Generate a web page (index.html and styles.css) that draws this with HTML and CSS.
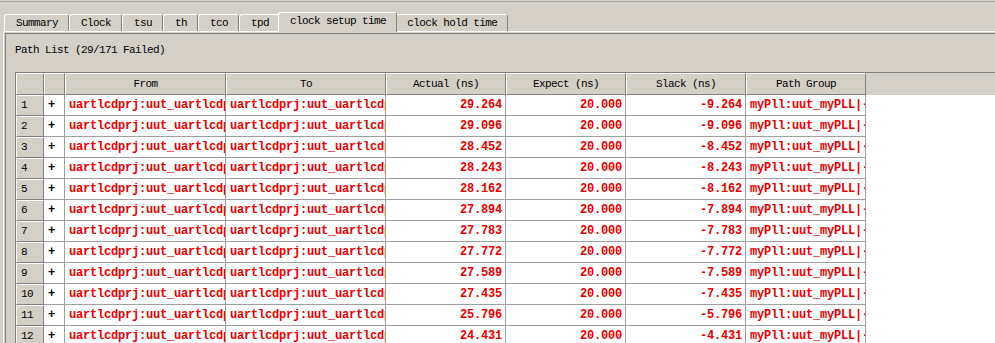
FILE: index.html
```html
<!DOCTYPE html>
<html>
<head>
    <title>Timing Analyzer - clock setup time</title>
    <link rel="stylesheet" href="styles.css">
</head>
<body>
    <div class="window">
        <div class="tabs">
            <div class="tab">Summary</div>
            <div class="tab">Clock</div>
            <div class="tab">tsu</div>
            <div class="tab">th</div>
            <div class="tab">tco</div>
            <div class="tab">tpd</div>
            <div class="tab active">clock setup time</div>
            <div class="tab">clock hold time</div>
        </div>

        <div class="panel">
            <div class="panel-inner">
                <div class="caption">Path List (29/171 Failed)</div>

                <div class="grid">
                    <div class="row head">
                        <div class="hc"></div>
                        <div class="hc"></div>
                        <div class="hc">From</div>
                        <div class="hc">To</div>
                        <div class="hc">Actual (ns)</div>
                        <div class="hc">Expect (ns)</div>
                        <div class="hc">Slack (ns)</div>
                        <div class="hc">Path Group</div>
                        <div class="hfill"></div>
                    </div>

                    <div class="row">
                        <div class="num">1</div><div class="plus">+</div>
                        <div class="cell">uartlcdprj:uut_uartlcdp</div>
                        <div class="cell">uartlcdprj:uut_uartlcdp</div>
                        <div class="cell r">29.264</div><div class="cell r">20.000</div><div class="cell r">-9.264</div>
                        <div class="cell">myPll:uut_myPLL|-</div><div class="fill"></div>
                    </div>
                    <div class="row">
                        <div class="num">2</div><div class="plus">+</div>
                        <div class="cell">uartlcdprj:uut_uartlcdp</div>
                        <div class="cell">uartlcdprj:uut_uartlcdp</div>
                        <div class="cell r">29.096</div><div class="cell r">20.000</div><div class="cell r">-9.096</div>
                        <div class="cell">myPll:uut_myPLL|-</div><div class="fill"></div>
                    </div>
                    <div class="row">
                        <div class="num">3</div><div class="plus">+</div>
                        <div class="cell">uartlcdprj:uut_uartlcdp</div>
                        <div class="cell">uartlcdprj:uut_uartlcdp</div>
                        <div class="cell r">28.452</div><div class="cell r">20.000</div><div class="cell r">-8.452</div>
                        <div class="cell">myPll:uut_myPLL|-</div><div class="fill"></div>
                    </div>
                    <div class="row">
                        <div class="num">4</div><div class="plus">+</div>
                        <div class="cell">uartlcdprj:uut_uartlcdp</div>
                        <div class="cell">uartlcdprj:uut_uartlcdp</div>
                        <div class="cell r">28.243</div><div class="cell r">20.000</div><div class="cell r">-8.243</div>
                        <div class="cell">myPll:uut_myPLL|-</div><div class="fill"></div>
                    </div>
                    <div class="row">
                        <div class="num">5</div><div class="plus">+</div>
                        <div class="cell">uartlcdprj:uut_uartlcdp</div>
                        <div class="cell">uartlcdprj:uut_uartlcdp</div>
                        <div class="cell r">28.162</div><div class="cell r">20.000</div><div class="cell r">-8.162</div>
                        <div class="cell">myPll:uut_myPLL|-</div><div class="fill"></div>
                    </div>
                    <div class="row">
                        <div class="num">6</div><div class="plus">+</div>
                        <div class="cell">uartlcdprj:uut_uartlcdp</div>
                        <div class="cell">uartlcdprj:uut_uartlcdp</div>
                        <div class="cell r">27.894</div><div class="cell r">20.000</div><div class="cell r">-7.894</div>
                        <div class="cell">myPll:uut_myPLL|-</div><div class="fill"></div>
                    </div>
                    <div class="row">
                        <div class="num">7</div><div class="plus">+</div>
                        <div class="cell">uartlcdprj:uut_uartlcdp</div>
                        <div class="cell">uartlcdprj:uut_uartlcdp</div>
                        <div class="cell r">27.783</div><div class="cell r">20.000</div><div class="cell r">-7.783</div>
                        <div class="cell">myPll:uut_myPLL|-</div><div class="fill"></div>
                    </div>
                    <div class="row">
                        <div class="num">8</div><div class="plus">+</div>
                        <div class="cell">uartlcdprj:uut_uartlcdp</div>
                        <div class="cell">uartlcdprj:uut_uartlcdp</div>
                        <div class="cell r">27.772</div><div class="cell r">20.000</div><div class="cell r">-7.772</div>
                        <div class="cell">myPll:uut_myPLL|-</div><div class="fill"></div>
                    </div>
                    <div class="row">
                        <div class="num">9</div><div class="plus">+</div>
                        <div class="cell">uartlcdprj:uut_uartlcdp</div>
                        <div class="cell">uartlcdprj:uut_uartlcdp</div>
                        <div class="cell r">27.589</div><div class="cell r">20.000</div><div class="cell r">-7.589</div>
                        <div class="cell">myPll:uut_myPLL|-</div><div class="fill"></div>
                    </div>
                    <div class="row">
                        <div class="num">10</div><div class="plus">+</div>
                        <div class="cell">uartlcdprj:uut_uartlcdp</div>
                        <div class="cell">uartlcdprj:uut_uartlcdp</div>
                        <div class="cell r">27.435</div><div class="cell r">20.000</div><div class="cell r">-7.435</div>
                        <div class="cell">myPll:uut_myPLL|-</div><div class="fill"></div>
                    </div>
                    <div class="row">
                        <div class="num">11</div><div class="plus">+</div>
                        <div class="cell">uartlcdprj:uut_uartlcdp</div>
                        <div class="cell">uartlcdprj:uut_uartlcdp</div>
                        <div class="cell r">25.796</div><div class="cell r">20.000</div><div class="cell r">-5.796</div>
                        <div class="cell">myPll:uut_myPLL|-</div><div class="fill"></div>
                    </div>
                    <div class="row">
                        <div class="num">12</div><div class="plus">+</div>
                        <div class="cell">uartlcdprj:uut_uartlcdp</div>
                        <div class="cell">uartlcdprj:uut_uartlcdp</div>
                        <div class="cell r">24.431</div><div class="cell r">20.000</div><div class="cell r">-4.431</div>
                        <div class="cell">myPll:uut_myPLL|-</div><div class="fill"></div>
                    </div>
                </div>
            </div>
        </div>
    </div>
</body>
</html>
```

FILE: styles.css
```css
body {
    margin: 0;
    padding-top: 1px;
    background-color: #d4d0c8;
    font-family: "Liberation Mono", "DejaVu Sans Mono", monospace;
    font-size: 11px;
    letter-spacing: -0.6px;
    color: #000;
    overflow: hidden;
}
.window {
    border-top: 1px solid #a8a5a0;
}
.tabs {
    display: flex;
    align-items: flex-end;
    height: 29px;
    padding-left: 4px;
}
.tab {
    box-sizing: border-box;
    height: 17px;
    line-height: 17px;
    padding: 0 10px 0 11px;
    border: 1px solid #fff;
    border-bottom: none;
    border-right-color: #808080;
    border-radius: 3px 3px 0 0;
    white-space: nowrap;
}
.tab.active {
    height: 20px;
    line-height: 17px;
    margin: 0 -2px -1px;
    padding: 0 10px 0 11px;
    background-color: #d4d0c8;
    z-index: 1;
}
.panel {
    margin-left: 3px;
    border-top: 1px solid #fff;
    border-left: 1px solid #fff;
    padding: 1px 0 0 1px;
}
.panel-inner {
    border-top: 1px solid #808080;
    border-left: 1px solid #808080;
    padding: 9px 0 0 9px;
    height: 330px;
    overflow: hidden;
}
.caption {
    line-height: 14px;
}
.grid {
    margin-top: 15px;
    border-top: 1px solid #808080;
    border-left: 1px solid #808080;
    background-color: #fff;
}
.row {
    display: grid;
    grid-template-columns: 28px 21px 161px 160px 120px 120px 120px 120px 1fr;
    height: 21px;
}
.row.head {
    height: 22px;
    background-color: #d4d0c8;
}
.hc {
    border-top: 1px solid #fff;
    border-left: 1px solid #fff;
    border-right: 1px solid #808080;
    border-bottom: 1px solid #808080;
    text-align: center;
    line-height: 21px;
    white-space: nowrap;
    overflow: hidden;
}
.hfill {
    background-color: #d4d0c8;
}
.num {
    background-color: #d4d0c8;
    border-top: 1px solid #fff;
    border-left: 1px solid #fff;
    border-right: 1px solid #808080;
    border-bottom: 1px solid #808080;
    padding-left: 4px;
    line-height: 19px;
}
.plus, .cell {
    border-right: 1px solid #a0a0a0;
    border-bottom: 1px solid #a0a0a0;
    line-height: 20px;
    white-space: nowrap;
    overflow: hidden;
    font-weight: bold;
    font-size: 12px;
    letter-spacing: -0.2px;
}
.plus {
    padding-left: 4px;
    color: #000;
}
.cell {
    padding: 0 3px 0 4px;
    color: #e80000;
}
.cell.r {
    text-align: right;
}
.fill {
    background-color: #fff;
}
```
